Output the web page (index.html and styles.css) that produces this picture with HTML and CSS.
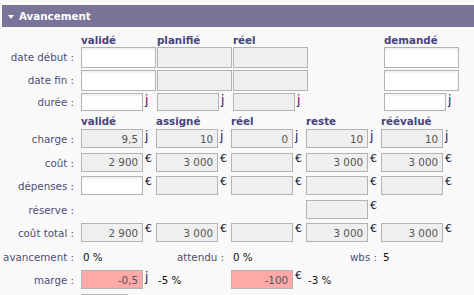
FILE: index.html
```html
<!DOCTYPE html>
<html lang="fr">
<head>
  <meta charset="UTF-8" />
  <title>Avancement</title>
  <link rel="stylesheet" href="styles.css">
</head>
<body>

  <div class="panel">
    <div class="panel-title"><span class="caret"></span>Avancement</div>

    <div class="grid grid-top">
      <span></span>
      <span class="col-head">validé</span>
      <span class="col-head">planifié</span>
      <span class="col-head">réel</span>
      <span></span>
      <span class="col-head">demandé</span>

      <span class="lbl">date début :</span>
      <span class="cell"><input class="fld date" type="text"></span>
      <span class="cell"><input class="fld date ro" type="text" readonly></span>
      <span class="cell"><input class="fld date ro" type="text" readonly></span>
      <span></span>
      <span class="cell"><input class="fld date" type="text"></span>

      <span class="lbl">date fin :</span>
      <span class="cell"><input class="fld date" type="text"></span>
      <span class="cell"><input class="fld date ro" type="text" readonly></span>
      <span class="cell"><input class="fld date ro" type="text" readonly></span>
      <span></span>
      <span class="cell"><input class="fld date" type="text"></span>

      <span class="lbl lbl-short">durée :</span>
      <span class="cell"><input class="fld short" type="text"><span class="unit">j</span></span>
      <span class="cell"><input class="fld short ro" type="text" readonly><span class="unit">j</span></span>
      <span class="cell"><input class="fld short ro" type="text" readonly><span class="unit">j</span></span>
      <span></span>
      <span class="cell"><input class="fld short" type="text"><span class="unit">j</span></span>
    </div>

    <div class="grid grid-bottom">
      <span></span>
      <span class="col-head">validé</span>
      <span class="col-head">assigné</span>
      <span class="col-head">réel</span>
      <span class="col-head">reste</span>
      <span class="col-head">réévalué</span>

      <span class="lbl">charge :</span>
      <span class="cell"><input class="fld ro" type="text" value="9,5" readonly><span class="unit">j</span></span>
      <span class="cell"><input class="fld ro" type="text" value="10" readonly><span class="unit">j</span></span>
      <span class="cell"><input class="fld ro" type="text" value="0" readonly><span class="unit">j</span></span>
      <span class="cell"><input class="fld ro" type="text" value="10" readonly><span class="unit">j</span></span>
      <span class="cell"><input class="fld ro" type="text" value="10" readonly><span class="unit">j</span></span>

      <span class="lbl">coût :</span>
      <span class="cell"><input class="fld ro" type="text" value="2 900" readonly><span class="unit eur">€</span></span>
      <span class="cell"><input class="fld ro" type="text" value="3 000" readonly><span class="unit eur">€</span></span>
      <span class="cell"><input class="fld ro" type="text" readonly><span class="unit eur">€</span></span>
      <span class="cell"><input class="fld ro" type="text" value="3 000" readonly><span class="unit eur">€</span></span>
      <span class="cell"><input class="fld ro" type="text" value="3 000" readonly><span class="unit eur">€</span></span>

      <span class="lbl">dépenses :</span>
      <span class="cell"><input class="fld" type="text"><span class="unit eur">€</span></span>
      <span class="cell"><input class="fld ro" type="text" readonly><span class="unit eur">€</span></span>
      <span class="cell"><input class="fld ro" type="text" readonly><span class="unit eur">€</span></span>
      <span class="cell"><input class="fld ro" type="text" readonly><span class="unit eur">€</span></span>
      <span class="cell"><input class="fld ro" type="text" readonly><span class="unit eur">€</span></span>

      <span class="lbl">réserve :</span>
      <span></span>
      <span></span>
      <span></span>
      <span class="cell"><input class="fld ro" type="text" readonly><span class="unit eur">€</span></span>
      <span></span>

      <span class="lbl">coût total :</span>
      <span class="cell"><input class="fld ro" type="text" value="2 900" readonly><span class="unit eur">€</span></span>
      <span class="cell"><input class="fld ro" type="text" value="3 000" readonly><span class="unit eur">€</span></span>
      <span class="cell"><input class="fld ro" type="text" readonly><span class="unit eur">€</span></span>
      <span class="cell"><input class="fld ro" type="text" value="3 000" readonly><span class="unit eur">€</span></span>
      <span class="cell"><input class="fld ro" type="text" value="3 000" readonly><span class="unit eur">€</span></span>

      <span class="lbl">avancement :</span>
      <span class="val">0 %</span>
      <span class="lbl">attendu :</span>
      <span class="val">0 %</span>
      <span class="lbl lbl-wbs">wbs :</span>
      <span class="val">5</span>

      <span class="lbl">marge :</span>
      <span class="cell"><input class="fld alert" type="text" value="-0,5"><span class="unit">j</span></span>
      <span class="val">-5 %</span>
      <span class="cell"><input class="fld alert" type="text" value="-100"><span class="unit eur">€</span></span>
      <span class="val">-3 %</span>
      <span></span>

      <span></span>
      <span class="cell"><input class="fld tiny" type="text"></span>
    </div>
  </div>

</body>
</html>
```

FILE: styles.css
```css
:root {
  --bandeau: #7a7598;
  --fond: #f9f9f9;
  --label: #4e4e76;
  --entete: #47447c;
  --bord: #b3b3b3;
  --gris-champ: #efefef;
  --rose: #ffa8a8;
}

* { box-sizing: border-box; margin: 0; padding: 0; }

body {
  font-family: "DejaVu Sans", Verdana, sans-serif;
  font-size: 10.3px;
  background: var(--fond);
  padding: 5px 0 0 2px;
  overflow: hidden;
}

.panel-title {
  height: 22px;
  background: var(--bandeau);
  color: white;
  font-weight: bold;
  display: flex;
  align-items: center;
  padding-left: 6px;
}

.caret {
  width: 0;
  height: 0;
  border-left: 3.5px solid transparent;
  border-right: 3.5px solid transparent;
  border-top: 4px solid white;
  margin-right: 5px;
  margin-top: 1px;
}

.grid {
  display: grid;
  align-items: start;
}

.grid-top {
  grid-template-columns: 79px 76px 76px 76px 75px 76px;
  grid-template-rows: 13px 23px 23px 18px;
  padding-top: 7px;
}

.grid-bottom {
  grid-template-columns: 79px 75px 75px 75px 75px 75px;
  grid-template-rows: 18px;
  grid-auto-rows: 23.5px;
}

.col-head {
  font-weight: bold;
  color: var(--entete);
  line-height: 13px;
}

.grid-bottom .col-head {
  align-self: end;
  margin-bottom: 1px;
}

.lbl {
  color: var(--label);
  text-align: right;
  padding-right: 7px;
  line-height: 20px;
}

.grid-top .lbl {
  line-height: 21px;
}

.grid-top .lbl-short {
  line-height: 18px;
}

.lbl-wbs {
  padding-right: 4px;
}

.val {
  color: #111;
  line-height: 20px;
  padding-left: 2px;
}

.cell {
  display: flex;
  align-items: flex-start;
}

.fld {
  width: 62px;
  height: 19px;
  border: 1px solid var(--bord);
  background: white;
  box-shadow: inset 0 2px 2px rgba(0,0,0,0.06);
  font-family: inherit;
  font-size: 10.3px;
  color: #555;
  text-align: right;
  padding: 0 4px 0 2px;
  outline: none;
}

.fld.ro {
  background: var(--gris-champ);
  box-shadow: none;
}

.fld.date {
  width: 75px;
  height: 21px;
}

.fld.short {
  height: 18px;
}

.fld.alert {
  background: var(--rose);
  box-shadow: none;
}

.fld.tiny {
  width: 47px;
}

.unit {
  color: #14145a;
  padding-left: 2px;
  font-size: 12px;
  line-height: 14px;
}

.unit.eur {
  font-size: 11px;
  line-height: 12px;
  color: #101030;
}
```
